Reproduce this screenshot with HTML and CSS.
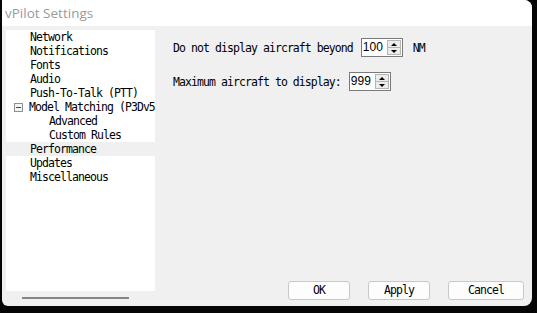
FILE: index.html
```html
<!DOCTYPE html>
<html lang="en">
<head>
  <meta charset="UTF-8">
  <title>vPilot Settings</title>
  <link rel="stylesheet" href="styles.css">
</head>
<body>
  <div class="window">
    <div class="titlebar">vPilot Settings</div>
    <div class="window-body">
      <div class="sidebar">
        <ul class="tree">
          <li class="node">Network</li>
          <li class="node">Notifications</li>
          <li class="node">Fonts</li>
          <li class="node">Audio</li>
          <li class="node">Push-To-Talk (PTT)</li>
          <li class="node parent"><span class="expander"></span>Model Matching (P3Dv5</li>
          <li class="node child">Advanced</li>
          <li class="node child">Custom Rules</li>
          <li class="node selected">Performance</li>
          <li class="node">Updates</li>
          <li class="node">Miscellaneous</li>
        </ul>
        <div class="hscroll"><div class="thumb"></div></div>
      </div>
      <div class="main">
        <div class="settings">
          <div class="setting-row">
            <span class="label">Do not display aircraft beyond</span>
            <div class="spinbox"><span class="value">100</span><span class="spin"><i class="up"></i><i class="down"></i></span></div>
            <span class="label unit">NM</span>
          </div>
          <div class="setting-row">
            <span class="label">Maximum aircraft to display:</span>
            <div class="spinbox"><span class="value">999</span><span class="spin"><i class="up"></i><i class="down"></i></span></div>
          </div>
        </div>
        <div class="buttons">
          <a class="btn">OK</a>
          <a class="btn">Apply</a>
          <a class="btn wide">Cancel</a>
        </div>
      </div>
    </div>
  </div>
</body>
</html>
```

FILE: styles.css
```css
body {
  margin: 0;
  background-color: #050505;
  height: 313px;
  overflow: hidden;
}

.window {
  margin-left: 2px;
  width: 530px;
  height: 306px;
  background-color: #f0f0f0;
  border-radius: 0 8px 8px 6px;
  overflow: hidden;
  display: flex;
  flex-direction: column;
}

.titlebar {
  height: 26px;
  background-color: #fff;
  color: #9a9a9a;
  font-family: "Open Sans", "Liberation Sans", sans-serif;
  font-size: 13.5px;
  line-height: 26px;
  padding-left: 3px;
}

.window-body {
  flex: 1;
  display: flex;
  padding: 4px 8px 0 4px;
}

.sidebar {
  width: 149px;
  display: flex;
  flex-direction: column;
}

.tree {
  list-style: none;
  margin: 0;
  padding: 0;
  height: 261px;
  background-color: #fff;
  font-family: "DejaVu Sans Mono", monospace;
  font-size: 11.5px;
  letter-spacing: -0.93px;
  color: #000;
}

.node {
  height: 14px;
  line-height: 14px;
  padding-left: 24px;
  white-space: nowrap;
  overflow: hidden;
}

.parent {
  padding-left: 8px;
  display: flex;
  align-items: center;
}

.expander {
  display: inline-block;
  width: 7px;
  height: 7px;
  border: 1px solid #8e8f8f;
  margin-right: 6px;
  position: relative;
  background-color: #f4f4f4;
}

.expander::after {
  content: "";
  position: absolute;
  left: 1px;
  top: 3px;
  width: 5px;
  height: 1px;
  background-color: #2b4c7e;
}

.child {
  padding-left: 43px;
}

.selected {
  background-color: #f0f0f0;
}

.hscroll {
  height: 3px;
  margin-top: 6px;
  padding-left: 16px;
}

.thumb {
  width: 107px;
  height: 2px;
  background-color: #858585;
}

.main {
  flex: 1;
  display: flex;
  flex-direction: column;
  justify-content: space-between;
}

.settings {
  padding: 8px 0 0 18px;
}

.setting-row {
  display: flex;
  align-items: center;
  height: 19px;
  margin-bottom: 15px;
}

.label {
  font-family: "DejaVu Sans Mono", monospace;
  font-size: 11.5px;
  letter-spacing: -0.93px;
  margin-right: 8px;
}

.unit {
  margin-left: 2px;
}

.spinbox {
  width: 40px;
  height: 17px;
  border: 1px solid #7a7a7a;
  background-color: #fff;
  display: flex;
  justify-content: space-between;
  margin-right: 8px;
}

.value {
  font-family: "Liberation Sans", Arial, sans-serif;
  font-size: 12px;
  line-height: 17px;
  padding-left: 1px;
}

.spin {
  width: 12px;
  margin: 1px;
  display: flex;
  flex-direction: column;
  border: 1px solid #b5b5b5;
  background-color: #ececec;
}

.spin i {
  flex: 1;
  display: flex;
  align-items: center;
  justify-content: center;
}

.spin .up {
  border-bottom: 1px solid #b5b5b5;
}

.spin .up::after {
  content: "";
  border-left: 3px solid transparent;
  border-right: 3px solid transparent;
  border-bottom: 3px solid #000;
}

.spin .down::after {
  content: "";
  border-left: 3px solid transparent;
  border-right: 3px solid transparent;
  border-top: 3px solid #000;
}

.buttons {
  display: flex;
  justify-content: flex-end;
  gap: 18px;
  margin-bottom: 6px;
}

.btn {
  width: 60px;
  height: 17px;
  border: 1px solid #c8c8c8;
  border-radius: 3px;
  background-color: #fdfdfd;
  font-family: "DejaVu Sans Mono", monospace;
  font-size: 11.5px;
  letter-spacing: -0.93px;
  line-height: 17px;
  text-align: center;
  cursor: pointer;
}

.btn.wide {
  width: 74px;
}
```
